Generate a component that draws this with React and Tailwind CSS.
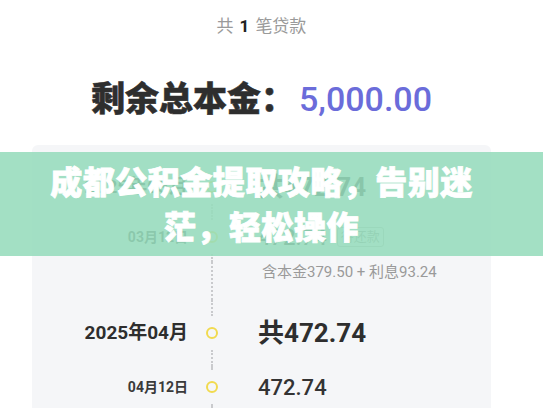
import React from 'react';

const font = { fontFamily: '"Roboto", "Noto Sans CJK SC", sans-serif' };

function Marker({ top = true, bottom = true }) {
  return (
    <div className="flex h-full flex-col items-center">
      <div className={`w-0 flex-1 ${top ? 'border-l-2 border-dotted border-[#c9cacd]' : ''}`} />
      <div className="my-[11px] h-[12px] w-[12px] rounded-full border-[2.5px] border-[#f1da4f]" />
      <div className={`w-0 flex-1 ${bottom ? 'border-l-2 border-dotted border-[#c9cacd]' : ''}`} />
    </div>
  );
}

function Row({ height, date, dateClass, marker, children }) {
  return (
    <div className={`grid grid-cols-[156px_48px_1fr] ${height}`}>
      <div className={`flex items-center justify-end ${dateClass}`}>{date}</div>
      <div>{marker}</div>
      <div className="flex items-center pl-[22px]">{children}</div>
    </div>
  );
}

export default function App() {
  return (
    <div className="relative h-[408px] w-[543px] overflow-hidden bg-white" style={font}>
      <div className="ml-[32px] w-[459px]">
        <div className="flex h-[54px] items-center justify-center text-[17px] text-[#9a9a9a]">
          共 <span className="mx-[6px] font-bold text-[#222]">1</span> 笔贷款
        </div>
        <div className="flex h-[91px] items-center justify-center pb-[1px]">
          <span className="text-[34px] font-black text-[#2e2e2e] [-webkit-text-stroke:0.5px_#2e2e2e]">
            剩余总本金：
          </span>
          <span className="ml-[4px] text-[34px] font-medium text-[#6b6cda]">5,000.00</span>
        </div>

        <div className="h-[263px] rounded-t-md bg-[#f5f6f8] pt-[17px]">
          <Row
            height="h-[50px]"
            date="2025年03月"
            dateClass="text-[19px] font-bold text-[#2e2e2e]"
            marker={<Marker top={false} />}
          >
            <span className="text-[26px] font-bold text-[#2e2e2e]">共472.74</span>
          </Row>
          <Row
            height="h-[50px]"
            date="03月12日"
            dateClass="text-[14px] font-bold text-[#3a3a3a]"
            marker={<Marker />}
          >
            <span className="text-[22px] font-medium text-[#333]">472.74</span>
            <span className="ml-[10px] rounded-[3px] border border-[#b9b9b9] px-[3px] text-[13px] leading-[18px] text-[#8f8f8f]">
              待还款
            </span>
          </Row>
          <div className="grid h-[38px] grid-cols-[156px_48px_1fr]">
            <div />
            <div className="flex justify-center">
              <div className="h-full w-0 border-l-2 border-dotted border-[#c9cacd]" />
            </div>
            <div className="pl-[26px] text-[15px] leading-[20px] text-[#9a9a9a]">
              含本金379.50 + 利息93.24
            </div>
          </div>
          <Row
            height="h-[66px]"
            date="2025年04月"
            dateClass="text-[19px] font-bold text-[#2e2e2e]"
            marker={<Marker />}
          >
            <span className="text-[26px] font-bold text-[#2e2e2e]">共472.74</span>
          </Row>
          <Row
            height="h-[42px]"
            date="04月12日"
            dateClass="text-[14px] font-bold text-[#3a3a3a]"
            marker={<Marker />}
          >
            <span className="text-[22px] font-medium text-[#333]">472.74</span>
          </Row>
        </div>
      </div>

      <div className="absolute left-0 top-[152px] h-[104px] w-[543px] bg-[rgba(150,220,188,0.88)]">
        <div
          className="ml-[32px] flex h-full w-[459px] flex-col items-center justify-center pb-[2px] text-center text-[32px] font-black leading-[45px] tracking-[0.5px] text-white [-webkit-text-stroke:0.8px_white]"
          style={{ fontFamily: '"Noto Sans CJK SC", sans-serif' }}
        >
          <div>成都公积金提取攻略，告别迷</div>
          <div>茫，轻松操作</div>
        </div>
      </div>
    </div>
  );
}
